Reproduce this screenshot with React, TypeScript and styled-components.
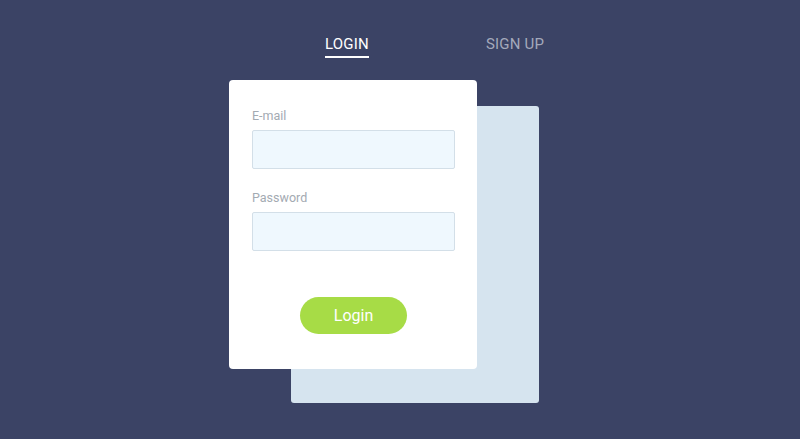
import React from 'react';
import styled, { createGlobalStyle } from 'styled-components';

const GlobalStyle = createGlobalStyle`
  html, body {
    margin: 0;
    padding: 0;
    background: #3b4365;
    font-family: Roboto, "Liberation Sans", Arial, sans-serif;
  }
`;

const Page = styled.div`
  width: 800px;
  height: 439px;
  background: #3b4365;
  overflow: hidden;
`;

const Scene = styled.div`
  width: 310px;
  margin-left: 229px;
  padding-top: 35px;
`;

// tabs
const Tabs = styled.nav`
  display: flex;
  gap: 117px;
  padding-left: 96px;
  height: 45px;
`;

const Tab = styled.div<{ $active?: boolean }>`
  font-size: 15px;
  letter-spacing: 0.2px;
  line-height: 18px;
  height: 21px;
  white-space: nowrap;
  color: ${(p) => (p.$active ? '#ffffff' : '#a4a9bb')};
  border-bottom: 2px solid ${(p) => (p.$active ? '#ffffff' : 'transparent')};
  cursor: pointer;
`;

const Stack = styled.div`
  position: relative;
  height: 323px;
`;

// card behind
const BackCard = styled.div`
  position: absolute;
  left: 62px;
  top: 26px;
  width: 248px;
  height: 297px;
  background: #d6e4ef;
  border-radius: 3px;
`;

const Card = styled.form`
  position: relative;
  width: 248px;
  height: 289px;
  box-sizing: border-box;
  background: #ffffff;
  border-radius: 4px;
  padding: 28px 22px 0 23px;
  display: flex;
  flex-direction: column;
`;

const Label = styled.label`
  font-size: 12.5px;
  line-height: 15px;
  color: #a3aab2;
  margin-bottom: 7px;
`;

const Input = styled.input<{ $gap?: number }>`
  width: 203px;
  height: 39px;
  box-sizing: border-box;
  background: #eff8fe;
  border: 1px solid #d3dfe8;
  border-radius: 2px;
  outline: none;
  margin-bottom: ${(p) => p.$gap ?? 21}px;
`;

const ButtonRow = styled.div`
  display: flex;
  justify-content: center;
  padding-top: 26px;
`;

const LoginButton = styled.button`
  width: 107px;
  height: 37px;
  border: none;
  border-radius: 19px;
  background: #a7dc46;
  color: #ffffff;
  font-family: Roboto, "Liberation Sans", Arial, sans-serif;
  font-size: 16px;
  cursor: pointer;
`;

export default function App() {
  return (
    <Page>
      <GlobalStyle />
      <Scene>
        <Tabs>
          <Tab $active>LOGIN</Tab>
          <Tab>SIGN UP</Tab>
        </Tabs>
        <Stack>
          <BackCard />
          <Card onSubmit={(e) => e.preventDefault()}>
            <Label>E-mail</Label>
            <Input type="email" />
            <Label>Password</Label>
            <Input type="password" $gap={20} />
            <ButtonRow>
              <LoginButton type="submit">Login</LoginButton>
            </ButtonRow>
          </Card>
        </Stack>
      </Scene>
    </Page>
  );
}
